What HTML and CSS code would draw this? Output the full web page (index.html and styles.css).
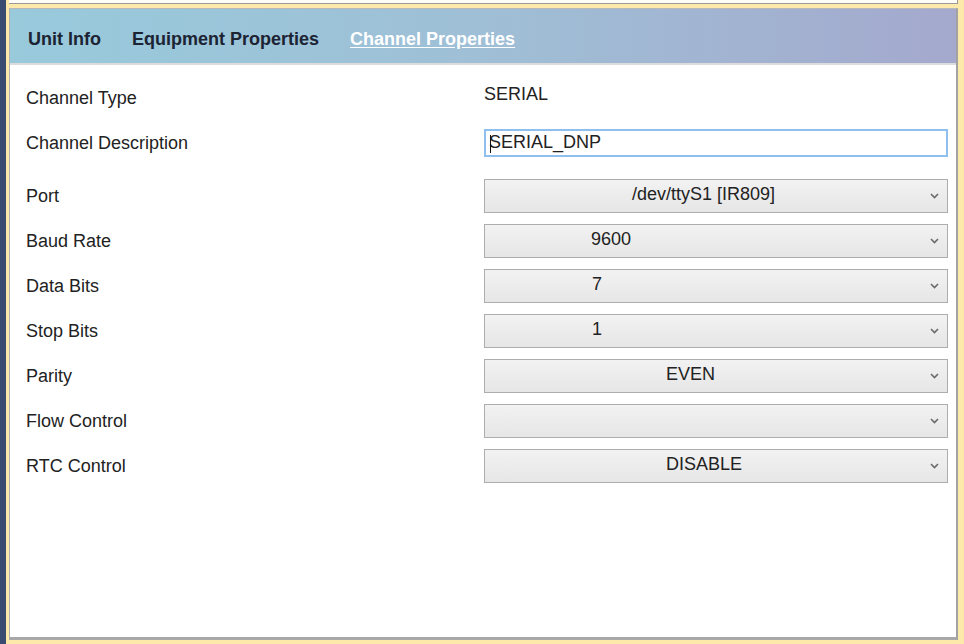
FILE: index.html
```html
<!DOCTYPE html>
<html>
<head>
<meta charset="utf-8">
<link rel="stylesheet" href="styles.css">
</head>
<body>
<div class="page">
  <div class="strip"></div>
  <div class="main">
    <div class="remnant"></div>
    <div class="panel">
      <div class="tabs">
        <span class="tab">Unit Info</span>
        <span class="tab">Equipment Properties</span>
        <span class="tab active">Channel Properties</span>
      </div>
      <div class="form">
        <div class="row row-type">
          <div class="label">Channel Type</div>
          <div class="value static">SERIAL</div>
        </div>
        <div class="row row-desc">
          <div class="label">Channel Description</div>
          <div class="value"><div class="input"><span class="caret"></span>SERIAL_DNP</div></div>
        </div>
        <div class="row row-first">
          <div class="label">Port</div>
          <div class="value"><div class="select"><span class="opt off-port">/dev/ttyS1 [IR809]</span><svg class="chev" width="9" height="6" viewBox="0 0 9 6"><path d="M1 1 L4.5 4.5 L8 1" fill="none" stroke="#6a6a6a" stroke-width="1.6"/></svg></div></div>
        </div>
        <div class="row">
          <div class="label">Baud Rate</div>
          <div class="value"><div class="select"><span class="opt off-baud">9600</span><svg class="chev" width="9" height="6" viewBox="0 0 9 6"><path d="M1 1 L4.5 4.5 L8 1" fill="none" stroke="#6a6a6a" stroke-width="1.6"/></svg></div></div>
        </div>
        <div class="row">
          <div class="label">Data Bits</div>
          <div class="value"><div class="select"><span class="opt off-num">7</span><svg class="chev" width="9" height="6" viewBox="0 0 9 6"><path d="M1 1 L4.5 4.5 L8 1" fill="none" stroke="#6a6a6a" stroke-width="1.6"/></svg></div></div>
        </div>
        <div class="row">
          <div class="label">Stop Bits</div>
          <div class="value"><div class="select"><span class="opt off-num">1</span><svg class="chev" width="9" height="6" viewBox="0 0 9 6"><path d="M1 1 L4.5 4.5 L8 1" fill="none" stroke="#6a6a6a" stroke-width="1.6"/></svg></div></div>
        </div>
        <div class="row">
          <div class="label">Parity</div>
          <div class="value"><div class="select"><span class="opt off-word">EVEN</span><svg class="chev" width="9" height="6" viewBox="0 0 9 6"><path d="M1 1 L4.5 4.5 L8 1" fill="none" stroke="#6a6a6a" stroke-width="1.6"/></svg></div></div>
        </div>
        <div class="row">
          <div class="label">Flow Control</div>
          <div class="value"><div class="select"><span class="opt off-word"></span><svg class="chev" width="9" height="6" viewBox="0 0 9 6"><path d="M1 1 L4.5 4.5 L8 1" fill="none" stroke="#6a6a6a" stroke-width="1.6"/></svg></div></div>
        </div>
        <div class="row">
          <div class="label">RTC Control</div>
          <div class="value"><div class="select"><span class="opt off-word">DISABLE</span><svg class="chev" width="9" height="6" viewBox="0 0 9 6"><path d="M1 1 L4.5 4.5 L8 1" fill="none" stroke="#6a6a6a" stroke-width="1.6"/></svg></div></div>
        </div>
      </div>
    </div>
  </div>
</div>
</body>
</html>
```
FILE: styles.css
```css
html, body {
  margin: 0;
  padding: 0;
}
body {
  background: #fde9a9;
  font-family: "Liberation Sans", Arial, sans-serif;
  color: #222;
  width: 964px;
  height: 644px;
  overflow: hidden;
}
.page {
  display: flex;
  height: 644px;
}
.strip {
  width: 6px;
  background: #3a4b72;
  flex: none;
}
.main {
  flex: 1;
  display: flex;
  flex-direction: column;
  padding: 0 6px 4px 3px;
  min-width: 0;
}
.remnant {
  height: 3px;
  background: #fdfcf7;
  border-bottom: 1px solid #9a9a9a;
  border-right: 1px solid #9a9a9a;
  margin-bottom: 4px;
  flex: none;
}
.panel {
  flex: 1;
  background: #fff;
  border-top: 1px solid #b8b8b8;
  border-left: 1px solid #b0b0b0;
  border-right: 2px solid #a2a2a2;
  border-bottom: 3px solid #a8a8a8;
  display: flex;
  flex-direction: column;
}
.tabs {
  background: linear-gradient(to right, #98cadc 0%, #9fbfd6 50%, #a4a9cd 100%);
  border-bottom: 2px solid #dcdcdc;
  display: flex;
  align-items: center;
  padding: 6px 0 0 18px;
  box-sizing: border-box;
  height: 56px;
}
.tab {
  font-weight: bold;
  font-size: 18px;
  color: #1c2333;
  margin-right: 31px;
}
.active {
  color: #fff;
  text-decoration: underline;
  text-underline-offset: 2px;
}
.form {
  padding: 16px 8px 0 16px;
  display: flex;
  flex-direction: column;
}
.row {
  display: flex;
  align-items: center;
  height: 34px;
  margin-top: 11px;
}
.row-type {
  margin-top: 0;
}
.row-desc {
  margin-top: 14px;
  height: 28px;
}
.row-first {
  margin-top: 22px;
}
.label {
  width: 458px;
  font-size: 18px;
  flex: none;
}
.value {
  flex: 1;
  font-size: 18px;
}
.static {
  padding-bottom: 8px;
}
.input {
  height: 28px;
  border: 2px solid #8fbfee;
  box-sizing: border-box;
  display: flex;
  align-items: center;
  padding: 0 0 1px 3px;
  position: relative;
}
.caret {
  position: absolute;
  left: 4px;
  top: 4px;
  width: 1px;
  height: 18px;
  background: #111;
}
.select {
  height: 34px;
  box-sizing: border-box;
  border: 1px solid #adadad;
  background: linear-gradient(#f2f2f2, #e6e6e6);
  display: flex;
  align-items: center;
  padding-bottom: 4px;
  position: relative;
}
.opt {
  flex: 1;
}
.off-port { padding-left: 147px; }
.off-baud { padding-left: 106px; }
.off-num { padding-left: 107px; }
.off-word { padding-left: 181px; }
.chev {
  margin-right: 8px;
  margin-top: 4px;
  flex: none;
}
```
